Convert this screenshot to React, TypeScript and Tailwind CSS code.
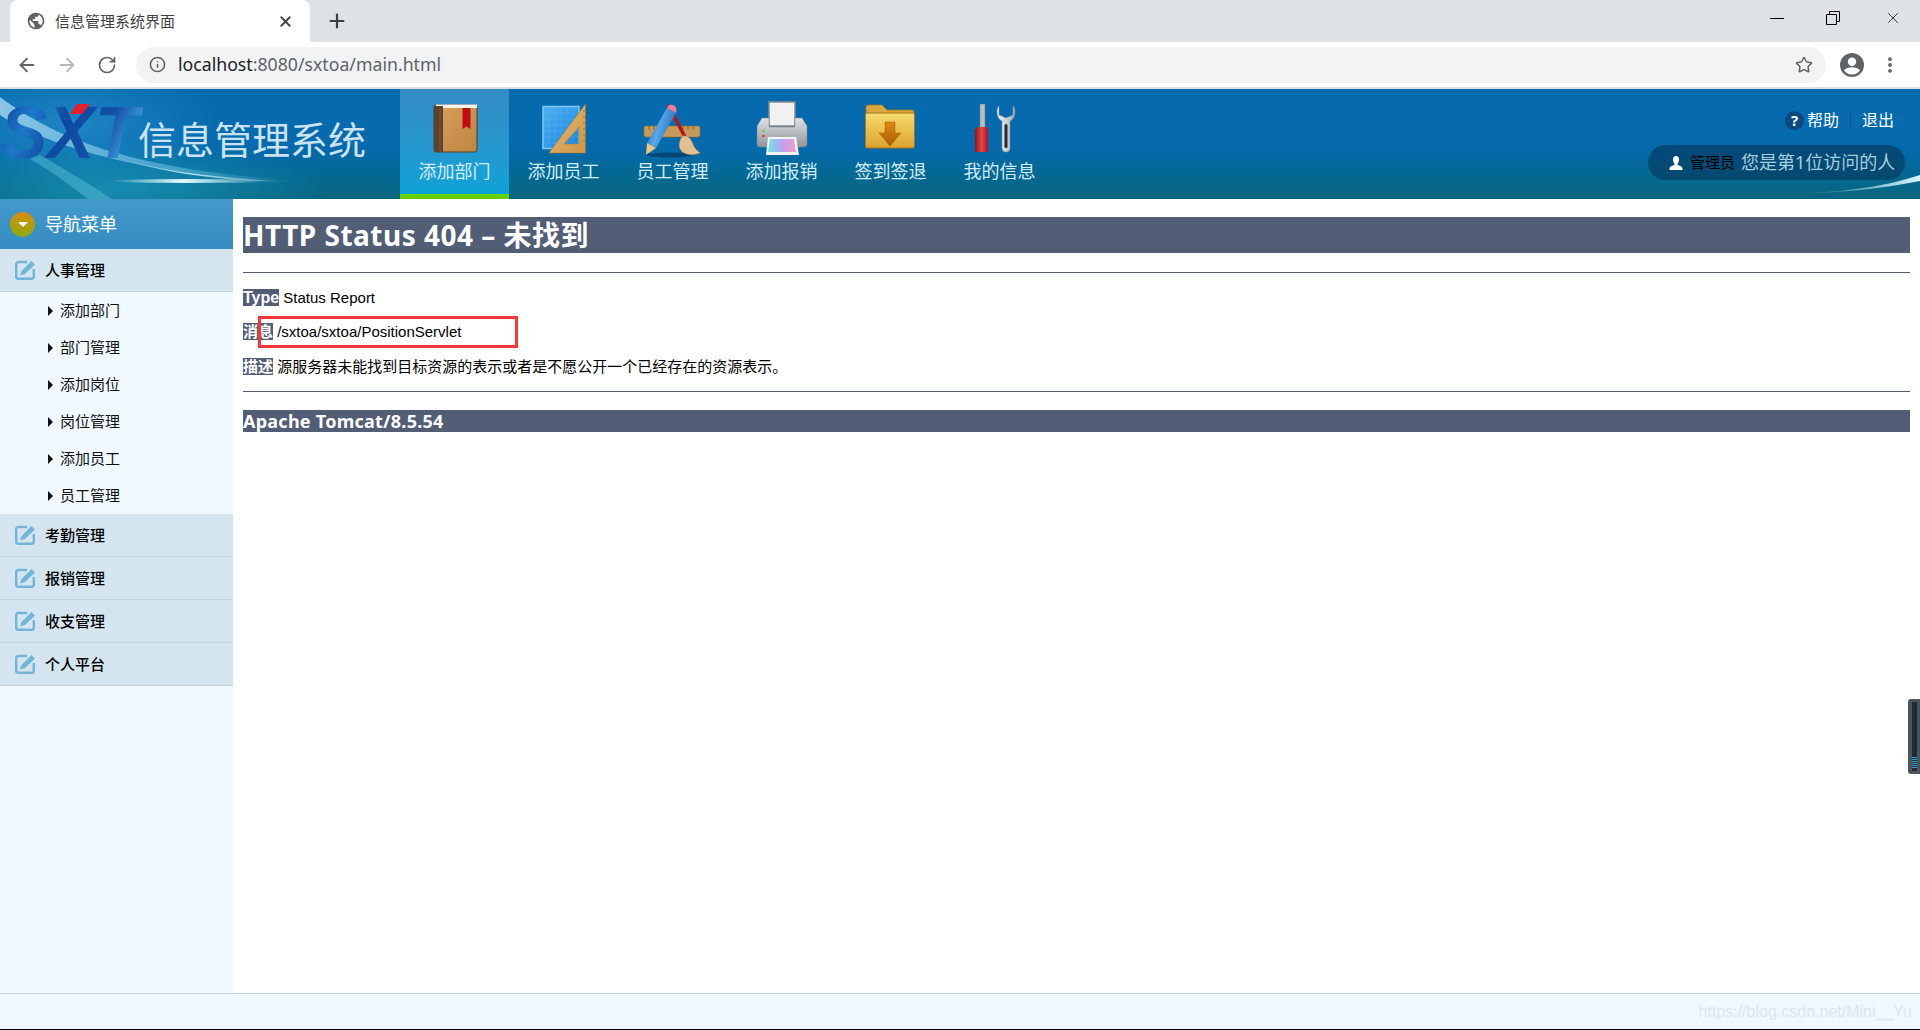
import { ArrowLeft, ArrowRight, Info, MoreVertical, Plus, RotateCw, Star, X } from "lucide-react";
import type { ReactNode } from "react";

const cjk = "font-['Noto_Sans','Noto_Sans_CJK_SC',sans-serif]";

function BookIcon() {
  return (
    <svg viewBox="0 0 60 60" className="w-[60px] h-[60px]">
      <defs>
        <linearGradient id="bookFill" x1="0" y1="0" x2="1" y2="1">
          <stop offset="0" stopColor="#dba05c" />
          <stop offset="1" stopColor="#bd8543" />
        </linearGradient>
      </defs>
      <rect x="9" y="6" width="43" height="47" rx="2" fill="url(#bookFill)" stroke="#4a3a2a" strokeWidth="1" />
      <rect x="11" y="5.500" width="41" height="3.500" fill="#f7f4ec" />
      <rect x="9" y="7" width="9" height="46" fill="#5c432b" />
      <path d="M15 10v42" stroke="#a9824f" strokeWidth="0.8" strokeDasharray="1 1.400" />
      <path d="M37.500 9h8v21l-4-2.500-4 2.500z" fill="#c00d12" />
    </svg>
  );
}

function TriangleIcon() {
  return (
    <svg viewBox="0 0 60 60" className="w-[60px] h-[60px]">
      <defs>
        <linearGradient id="planFill" x1="0" y1="0" x2="1" y2="1">
          <stop offset="0" stopColor="#4fb0f0" />
          <stop offset="1" stopColor="#1a86e2" />
        </linearGradient>
        <linearGradient id="rulerFill" x1="0" y1="0" x2="1" y2="1">
          <stop offset="0" stopColor="#ecbd74" />
          <stop offset="1" stopColor="#cd9544" />
        </linearGradient>
      </defs>
      <rect x="9" y="7.500" width="36" height="42" fill="url(#planFill)" stroke="#7fc6f5" strokeWidth="1.500" />
      <path d="M15 8v41M21 8v41M27 8v41M33 8v41M39 8v41M9 14h36M9 20h36M9 26h36M9 32h36M9 38h36M9 44h36" stroke="#8fd0f7" strokeWidth="0.300" opacity="0.5" />
      <path fillRule="evenodd" d="M51.500 5v49H15zM45 28 30 45h15z" fill="url(#rulerFill)" stroke="#a87429" strokeWidth="0.500" />
      <path d="M51 12h-2M51 18h-2M51 24h-2M51 30h-2M51 36h-2M51 42h-2" stroke="#8c5f20" strokeWidth="0.700" />
    </svg>
  );
}

function PencilRulerIcon() {
  return (
    <svg viewBox="0 0 60 60" className="w-[60px] h-[60px]">
      <defs>
        <linearGradient id="pencilFill" x1="0" y1="0" x2="1" y2="0.400">
          <stop offset="0" stopColor="#1c55a8" />
          <stop offset="0.500" stopColor="#58a7e6" />
          <stop offset="1" stopColor="#2d6fbf" />
        </linearGradient>
      </defs>
      <ellipse cx="27" cy="56" rx="22" ry="2.500" fill="#06375f" opacity="0.700" />
      <rect x="1" y="27" width="56" height="11" rx="2" fill="#c79a5a" stroke="#9a6c2c" strokeWidth="0.600" />
      <path d="M6 27v4M11 27v4M16 27v4M40 27v4M45 27v4M50 27v4" stroke="#7a5320" strokeWidth="0.800" />
      <path d="M25 6 L42 38" stroke="#b8141a" strokeWidth="3.500" />
      <path d="M40 37c5-1 8 3 10 8 2 5 5 7 7 9-8 3-17 2-20-4-2-4 0-11 3-13z" fill="#e3c090" stroke="#a67b45" strokeWidth="0.500" />
      <path d="M24 9 33 14 13 49 4 44z" fill="url(#pencilFill)" />
      <path d="M24 9c1-3 3-4 6-3 3 1 4 4 3 8z" fill="#ee7d9a" />
      <path d="M4 44l9 5-10 7z" fill="#eec77a" />
      <path d="M3 56l3-2 0 2z" fill="#222" />
    </svg>
  );
}

function PrinterIcon() {
  return (
    <svg viewBox="0 0 60 60" className="w-[60px] h-[60px]">
      <defs>
        <linearGradient id="printerBody" x1="0" y1="0" x2="0" y2="1">
          <stop offset="0" stopColor="#dfe2e5" />
          <stop offset="1" stopColor="#8f959b" />
        </linearGradient>
        <linearGradient id="printerSheet" x1="0" y1="0" x2="1" y2="0">
          <stop offset="0" stopColor="#6fe4e6" />
          <stop offset="0.500" stopColor="#b9a2f4" />
          <stop offset="1" stopColor="#f79ac4" />
        </linearGradient>
      </defs>
      <rect x="17" y="3" width="26" height="24" fill="#f1f1f1" stroke="#8c8c8c" strokeWidth="1.500" />
      <path d="M10 19h7v9h26v-9h7l5 8v18c0 2-1 3-3 3H8c-2 0-3-1-3-3V27z" fill="url(#printerBody)" stroke="#7c8187" strokeWidth="0.500" />
      <rect x="10" y="31" width="3" height="2" fill="#6fd43a" />
      <rect x="10" y="36" width="3" height="2" fill="#e0443a" />
      <path d="M16 38h28l3 18H14z" fill="#f6f6f6" />
      <path d="M18 40h24l2 13H16z" fill="url(#printerSheet)" />
    </svg>
  );
}

function FolderIcon() {
  return (
    <svg viewBox="0 0 60 60" className="w-[60px] h-[60px]">
      <defs>
        <linearGradient id="folderFill" x1="0" y1="0" x2="0" y2="1">
          <stop offset="0" stopColor="#f6dc6e" />
          <stop offset="1" stopColor="#dca22c" />
        </linearGradient>
        <linearGradient id="folderArrow" x1="0" y1="0" x2="0" y2="1">
          <stop offset="0" stopColor="#e08a10" />
          <stop offset="1" stopColor="#a95a06" />
        </linearGradient>
      </defs>
      <path d="M5 9c0-2 1-3 3-3h13l5 5h25c1 0 2 1 2 2v6H5z" fill="#d9a93e" stroke="#a8741a" strokeWidth="0.800" />
      <rect x="4.500" y="14" width="49" height="35" rx="1.500" fill="url(#folderFill)" stroke="#a8741a" strokeWidth="1" />
      <path d="M24 23h10v11h6L29 47 18 34h6z" fill="url(#folderArrow)" stroke="#8a4f0a" strokeWidth="0.400" />
    </svg>
  );
}

function ToolsIcon() {
  return (
    <svg viewBox="0 0 60 60" className="w-[60px] h-[60px]">
      <defs>
        <linearGradient id="handleFill" x1="0" y1="0" x2="1" y2="0">
          <stop offset="0" stopColor="#8f1118" />
          <stop offset="0.500" stopColor="#e8474d" />
          <stop offset="1" stopColor="#a8141c" />
        </linearGradient>
        <linearGradient id="wrenchFill" x1="0" y1="0" x2="1" y2="0">
          <stop offset="0" stopColor="#f2f4f5" />
          <stop offset="1" stopColor="#a9b0b5" />
        </linearGradient>
      </defs>
      <rect x="10" y="5" width="5" height="26" fill="#b9bcc0" stroke="#777" strokeWidth="0.500" />
      <path d="M8 28h9l1 3v20c0 1-1 2-2 2H7c-1 0-2-1-2-2V31z" fill="url(#handleFill)" />
      <path d="M28 8c-2 4-1 12 4 14v27c0 3 2 4 4 4s4-1 4-4V22c5-2 6-10 4-14l-1-1v9l-7 3-7-3V7z" fill="url(#wrenchFill)" stroke="#8b9298" strokeWidth="0.500" />
      <rect x="34.500" y="25" width="3" height="24" rx="1.500" fill="#2b2b2b" />
    </svg>
  );
}

function EditIcon() {
  return (
    <svg viewBox="0 0 20 20" className="w-5 h-5 shrink-0">
      <path d="M12 2H3.500C2 2 1.200 3 1.200 4.200v12.600c0 1.200.8 2 2.300 2h13c1.500 0 2.300-.8 2.300-2V9" fill="none" stroke="#73b5da" strokeWidth="2.400" />
      <path d="M16.500 1 20 4.500 10 14l-5 1.500L6.500 11z" fill="#73b5da" />
    </svg>
  );
}

const navItems: { label: string; icon: ReactNode; active?: boolean }[] = [
  { label: "添加部门", icon: <BookIcon />, active: true },
  { label: "添加员工", icon: <TriangleIcon /> },
  { label: "员工管理", icon: <PencilRulerIcon /> },
  { label: "添加报销", icon: <PrinterIcon /> },
  { label: "签到签退", icon: <FolderIcon /> },
  { label: "我的信息", icon: <ToolsIcon /> },
];

const subItems = ["添加部门", "部门管理", "添加岗位", "岗位管理", "添加员工", "员工管理"];
const groups = ["考勤管理", "报销管理", "收支管理", "个人平台"];

function BrowserChrome() {
  return (
    <div className="shrink-0">
      <div className="h-[42px] bg-[#dee1e6] flex items-center pl-[10px]">
        <div className="w-[300px] h-[42px] bg-white rounded-t-lg flex items-center pl-4 pr-[16px]">
          <svg viewBox="0 0 24 24" className="w-[20px] h-[20px] shrink-0 fill-[#5f6368]">
            <path d="M12 2a10 10 0 1 0 0 20 10 10 0 0 0 0-20zm-1 17.900A8 8 0 0 1 4 12l1-.9L10 16v1c0 1 .5 2 1 2.900zm6.900-2.500c-.3-.8-1-1.400-1.900-1.400h-1v-3c0-.6-.4-1-1-1H8v-2h2c.6 0 1-.4 1-1V7h2c1.100 0 2-.9 2-2v-.4a8 8 0 0 1 2.900 12.800z" />
          </svg>
          <span className={`ml-[9px] text-[15px] text-[#3c4043] flex-1 ${cjk}`}>信息管理系统界面</span>
          <X className="w-[17px] h-[17px] text-[#3c4043]" strokeWidth={2.6} />
        </div>
        <Plus className="w-[22px] h-[22px] ml-[16px] text-[#3c4043]" strokeWidth={2.4} />
        <div className="ml-auto flex items-center self-start h-[36px] text-[#222]">
          <div className="w-[14px] h-px bg-black mr-[42px]" />
          <svg viewBox="0 0 14 14" className="w-[14px] h-[14px] mr-[44px] fill-none stroke-black">
            <path d="M.5 3.500h10v10H.5zM3.500 3.500v-3h10v10h-3" />
          </svg>
          <X className="w-[18px] h-[18px] mr-[18px] text-black" strokeWidth={1} />
        </div>
      </div>
      <div className="h-[47px] bg-white flex items-center border-b-[2px] border-[#dcdee1]">
        <ArrowLeft className="w-[22px] h-[22px] ml-[16px] text-[#5f6368]" strokeWidth={2} />
        <ArrowRight className="w-[22px] h-[22px] ml-[18px] text-[#b5b7ba]" strokeWidth={2} />
        <RotateCw className="w-[20px] h-[20px] ml-[19px] text-[#5f6368]" strokeWidth={2} />
        <div className="ml-[19px] w-[1690px] h-[36px] rounded-full bg-[#f1f3f4] flex items-center pl-[13px] pr-[13px]">
          <Info className="w-[17px] h-[17px] text-[#5f6368]" strokeWidth={2.2} />
          <span className="ml-[12px] text-[17.700px] text-[#5f6368] font-['Noto_Sans',sans-serif] flex-1">
            <span className="text-[#202124]">localhost</span>:8080/sxtoa/main.html
          </span>
          <Star className="w-[18px] h-[18px] text-[#5f6368]" strokeWidth={2} />
        </div>
        <svg viewBox="0 0 24 24" className="w-[24px] h-[24px] ml-[14px] fill-[#5f6368]">
          <path d="M12 0a12 12 0 1 0 0 24 12 12 0 0 0 0-24zm0 4.500a4.200 4.200 0 1 1 0 8.400 4.200 4.200 0 0 1 0-8.400zm0 17c-3.400 0-6.400-1.700-8-4.300 1.400-2 5.500-3 8-3s6.600 1 8 3c-1.600 2.600-4.600 4.300-8 4.300z" />
        </svg>
        <MoreVertical className="w-[20px] h-[20px] ml-[16px] text-[#5f6368]" strokeWidth={2.6} />
      </div>
    </div>
  );
}

function Header() {
  return (
    <header className={`relative h-[110px] shrink-0 flex bg-gradient-to-b from-[#056aae] via-[#056aae] to-[#08667e] overflow-hidden ${cjk}`}>
      <svg viewBox="0 0 1920 110" className="absolute inset-0 w-[1920px] h-[110px]" preserveAspectRatio="none">
        <defs>
          <linearGradient id="streak" x1="0" y1="0" x2="1" y2="0">
            <stop offset="0" stopColor="#bfe8fb" stopOpacity="0.700" />
            <stop offset="0.600" stopColor="#7ccbe8" stopOpacity="0.450" />
            <stop offset="1" stopColor="#7ccbe8" stopOpacity="0" />
          </linearGradient>
          <linearGradient id="streakRight" x1="0" y1="0" x2="1" y2="0">
            <stop offset="0" stopColor="#c9f0fb" stopOpacity="0" />
            <stop offset="1" stopColor="#d8f6ff" stopOpacity="1" />
          </linearGradient>
          <radialGradient id="glow">
            <stop offset="0" stopColor="#3fa6dc" stopOpacity="0.450" />
            <stop offset="1" stopColor="#3fa6dc" stopOpacity="0" />
          </radialGradient>
          <radialGradient id="glowLow">
            <stop offset="0" stopColor="#1d9cc4" stopOpacity="0.700" />
            <stop offset="1" stopColor="#1d9cc4" stopOpacity="0" />
          </radialGradient>
          <linearGradient id="core" x1="0" y1="0" x2="1" y2="0">
            <stop offset="0" stopColor="#e8fbff" stopOpacity="0" />
            <stop offset="0.450" stopColor="#e8fbff" stopOpacity="1" />
            <stop offset="1" stopColor="#e8fbff" stopOpacity="0" />
          </linearGradient>
        </defs>
        <ellipse cx="70" cy="35" rx="150" ry="60" fill="url(#glow)" />
        <ellipse cx="120" cy="100" rx="210" ry="50" fill="url(#glowLow)" />
        <path d="M0 8C50 45 120 80 300 92 190 92 60 66 0 26z" fill="url(#streak)" />
        <path d="M40 66C70 84 95 98 112 110H88C72 98 52 82 30 70z" fill="#6ccbe2" opacity="0.400" />
        <path d="M100 62c40 16 90 26 200 31-80 0-150-10-200-31z" fill="url(#core)" opacity="0.800" />
        <ellipse cx="190" cy="92" rx="80" ry="2" fill="url(#core)" />
        <path d="M1800 104c50-1 90-8 120-18v6c-40 8-80 12-120 12z" fill="url(#streakRight)" />
      </svg>
      <div className="relative w-[400px] shrink-0 flex items-center">
        <svg viewBox="0 0 138 110" className="w-[138px] h-[110px] shrink-0 overflow-visible">
          <defs>
            <linearGradient id="logoFill" x1="0" y1="0" x2="1" y2="0.300">
              <stop offset="0" stopColor="#0b3690" />
              <stop offset="0.280" stopColor="#1f78cc" />
              <stop offset="0.500" stopColor="#0f4aa2" />
              <stop offset="0.800" stopColor="#134fa6" />
              <stop offset="1" stopColor="#3d97da" />
            </linearGradient>
          </defs>
          <text
            x="0"
            y="69"
            textLength="138"
            lengthAdjust="spacingAndGlyphs"
            fontSize="75"
            fontStyle="italic"
            fontWeight="900"
            fontFamily="Liberation Sans, sans-serif"
            fill="url(#logoFill)"
          >
            SXT
          </text>
          <path d="M77 15h13l-8 10H70z" fill="#e5202c" />
        </svg>
        <span className="mt-[-10px] text-[38px] leading-none text-[#cbe3f0] whitespace-nowrap">信息管理系统</span>
      </div>
      {navItems.map((item) => (
        <div
          key={item.label}
          className={`relative w-[109px] h-[110px] pt-[10px] flex flex-col items-center border-b-[5px] ${
            item.active ? "border-[#66d003] bg-gradient-to-b from-[#348cc4] to-[#0aa2d8]" : "border-transparent"
          }`}
        >
          {item.icon}
          <span className="text-[18px] leading-[24px] text-[#d3edf5]">{item.label}</span>
        </div>
      ))}
      <div className="relative ml-auto mr-[15px] w-[257px] flex flex-col items-end">
        <div className="flex items-center h-[24px] mt-[19px] mr-[11px] text-[16px] text-white">
          <span className="w-[19px] h-[19px] mr-[3px] rounded-full bg-[#0b4a7c] text-[15px] leading-[19px] font-bold text-center">?</span>
          <span>帮助</span>
          <span className="w-px h-[14px] mx-[11px] bg-[#0b4a7c]" />
          <span>退出</span>
        </div>
        <div className="mt-[13px] w-[257px] h-[35px] rounded-full bg-[#04365a]/60 flex items-center pl-[20px]">
          <svg viewBox="0 0 16 16" className="w-[16px] h-[16px] fill-white shrink-0">
            <path d="M8 1c2 0 3 1.500 3 3.500S10 8.500 9.500 9v1c2 .5 5 1.500 5 3.500V15h-13v-1.500c0-2 3-3 5-3.500V9C6 8.500 5 6.500 5 4.500S6 1 8 1z" />
          </svg>
          <span className="ml-[6px] w-[51px] text-[15px] text-black whitespace-nowrap">管理员</span>
          <span className="text-[18px] text-[#a6cfdc] whitespace-nowrap">您是第1位访问的人</span>
        </div>
      </div>
    </header>
  );
}

function GroupRow({ label }: { label: string }) {
  return (
    <div className="h-[43px] bg-[#d4e5ef] border-b border-[#c3d5e0] flex items-center pl-[15px]">
      <EditIcon />
      <span className="ml-[10px] text-[15px] font-medium text-black">{label}</span>
    </div>
  );
}

function Sidebar() {
  return (
    <aside className={`w-[233px] shrink-0 bg-[#f0f9ff] ${cjk}`}>
      <div className="h-[50px] bg-gradient-to-b from-[#4499cc] to-[#348cc2] flex items-center pl-[10px]">
        <span className="w-[25px] h-[25px] rounded-full bg-gradient-to-b from-[#d98b08] to-[#86aa10] flex items-center justify-center">
          <span className="w-0 h-0 border-x-[5px] border-x-transparent border-t-[5px] border-t-white" />
        </span>
        <span className="ml-[10px] text-[18px] text-white">导航菜单</span>
      </div>
      <GroupRow label="人事管理" />
      <ul className="h-[222px]">
        {subItems.map((s) => (
          <li key={s} className="h-[37px] flex items-center pl-[48px]">
            <span className="w-0 h-0 border-y-[5px] border-y-transparent border-l-[5px] border-l-[#111]" />
            <span className="ml-[7px] text-[15px] text-[#111]">{s}</span>
          </li>
        ))}
      </ul>
      {groups.map((g) => (
        <GroupRow key={g} label={g} />
      ))}
    </aside>
  );
}

function Label({ children, wide }: { children: ReactNode; wide?: boolean }) {
  return <span className={`bg-[#525d76] text-white font-bold ${wide ? "text-[16px]" : ""}`}>{children}</span>;
}

function Content() {
  return (
    <main className="relative flex-1 bg-white pt-[18px] pl-[10px] pr-[10px] text-[15px] text-black font-['Liberation_Sans','Noto_Sans_CJK_SC',sans-serif]">
      <h1 className="h-[36px] bg-[#525d76] text-white text-[28px] leading-[36px] font-bold font-['Noto_Sans','Noto_Sans_CJK_SC',sans-serif] tracking-[0.5px]">
        HTTP Status 404 – 未找到
      </h1>
      <hr className="mt-[19px] border-[#525d76]" />
      <div className="mt-[15px] h-[20px] leading-[20px]">
        <Label wide>Type</Label> Status Report
      </div>
      <div className="mt-[14px] h-[20px] leading-[20px]">
        <Label>消息</Label> /sxtoa/sxtoa/PositionServlet
      </div>
      <div className="mt-[15px] h-[20px] leading-[20px]">
        <Label>描述</Label> 源服务器未能找到目标资源的表示或者是不愿公开一个已经存在的资源表示。
      </div>
      <hr className="mt-[14px] border-[#525d76]" />
      <h3 className="mt-[18px] h-[22px] bg-[#525d76] text-white text-[18px] leading-[22px] font-bold font-['Noto_Sans','Noto_Sans_CJK_SC',sans-serif] tracking-[0.25px]">
        Apache Tomcat/8.5.54
      </h3>
      <div className="absolute left-[25px] top-[117px] w-[260px] h-[32px] border-[3px] border-[#f33636]" />
      <div className="absolute right-0 top-[500px] w-[12px] h-[75px] rounded-l-[3px] bg-[#4a545c] p-[3px] pl-[4px]">
        <div className="w-[5px] h-full flex flex-col justify-end gap-[1px] bg-[#1f2a33] pb-[3px]">
          <div className="h-[1px] bg-[#2fa5d8]" />
          <div className="h-[1px] bg-[#2fa5d8]" />
          <div className="h-[1px] bg-[#2fa5d8]" />
          <div className="h-[1px] bg-[#2fa5d8]" />
          <div className="h-[1px] bg-[#2fa5d8]" />
          <div className="h-[1px] bg-[#2fa5d8]" />
        </div>
      </div>
    </main>
  );
}

export default function App() {
  return (
    <div className="w-[1920px] h-[1030px] flex flex-col overflow-hidden bg-white">
      <BrowserChrome />
      <Header />
      <div className="flex-1 flex min-h-0">
        <Sidebar />
        <Content />
      </div>
      <footer className="h-[37px] shrink-0 bg-[#f0f8fe] border-t border-[#bfd0dc] border-b border-b-black flex items-center justify-end pr-[8px]">
        <span className="text-[16px] text-[#dfe5e9] font-['Liberation_Sans',sans-serif]">https://blog.csdn.net/Mini__Yu</span>
      </footer>
    </div>
  );
}
